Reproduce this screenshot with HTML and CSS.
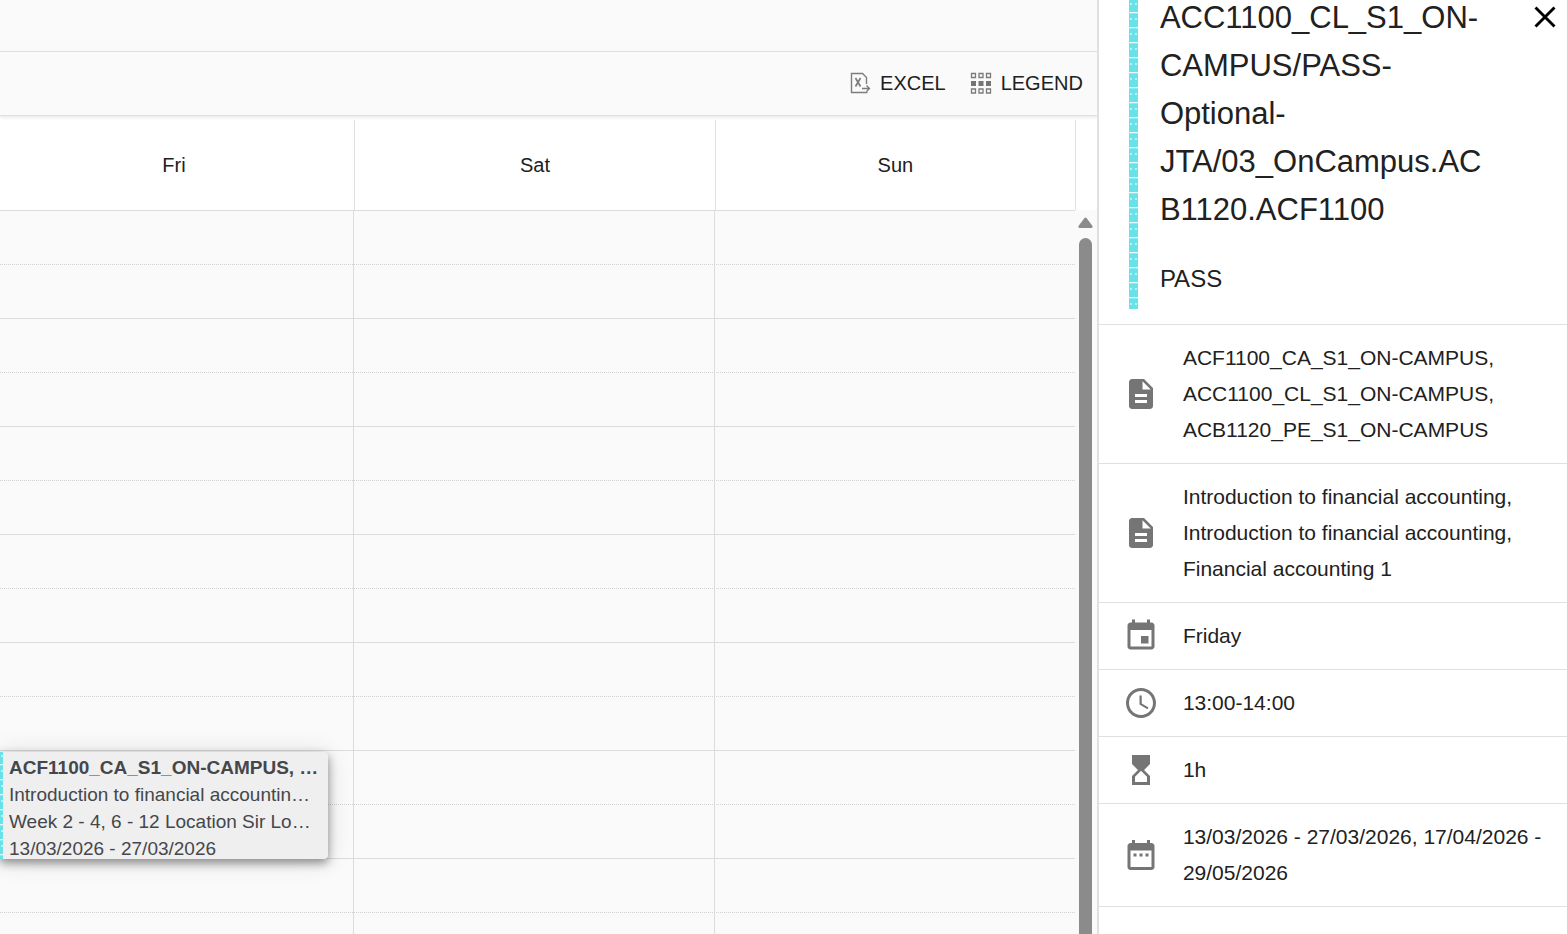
FILE: index.html
```html
<!DOCTYPE html>
<html lang="en">
<head>
<meta charset="utf-8">
<title>Timetable</title>
<link rel="stylesheet" href="styles.css">
</head>
<body>
<div class="app">
  <main class="planner">
    <div class="topbar"></div>
    <div class="toolbar">
      <button class="tool" type="button">
        <svg class="tool-icon" viewBox="0 0 22 22" aria-hidden="true"><g fill="none" stroke="#7d7d7d" stroke-width="1.400"><path d="M17.500 12V5.500L13.500 1.500H2.500V20.500H18.500M13 16.500H20.500M17.500 13.500L20.500 16.500L17.500 19.500"/><path d="M6.500 6L11.500 14.500M11.500 6L6.500 14.500" stroke-width="1.700"/></g></svg>
        EXCEL
      </button>
      <button class="tool" type="button">
        <svg class="tool-icon" viewBox="0 0 22 22" aria-hidden="true"><g fill="none" stroke="#7b7b7b" stroke-width="1.300"><path d="M1.500 1.500h4v4h-4zM9 1.500h4v4h-4zM16.500 1.500h4v4h-4zM1.500 17h4v4h-4zM9 17h4v4h-4zM16.500 17h4v4h-4z"/></g><path fill="#757575" d="M1 9h5v5H1zM8.500 9h5v5h-5zM16 9h5v5h-5z"/></svg>
        LEGEND
      </button>
    </div>
    <div class="days">
      <div class="day">Fri</div>
      <div class="day">Sat</div>
      <div class="day">Sun</div>
    </div>
    <div class="calendar">
      <div class="grid">
        <div class="column">
          <article class="event">
            <p class="event-line event-title">ACF1100_CA_S1_ON-CAMPUS, …</p>
            <p class="event-line">Introduction to financial accountin…</p>
            <p class="event-line">Week 2 - 4, 6 - 12 Location Sir Lo…</p>
            <p class="event-line">13/03/2026 - 27/03/2026</p>
          </article>
        </div>
        <div class="column"></div>
        <div class="column"></div>
      </div>
      <div class="scrollbar">
        <svg class="scroll-up" viewBox="0 0 15 11" aria-hidden="true"><path d="M6.500 1Q7.500 0 8.500 1L14.500 9Q15 11 13.500 11H1.500Q0 11 .5 9Z" fill="#8b8b8b"/></svg>
        <div class="thumb"></div>
      </div>
    </div>
  </main>
  <aside class="panel">
    <header class="panel-head">
      <div class="stripe"></div>
      <div class="heading">
        <h1 class="title">ACC1100_CL_S1_ON-CAMPUS/PASS-Optional-JTA/03_OnCampus.ACB1120.ACF1100</h1>
        <p class="subtitle">PASS</p>
      </div>
      <button class="close" type="button" aria-label="Close">
        <svg class="close-icon" viewBox="0 0 22 22" aria-hidden="true"><path d="M1.500 1.500L20.500 20.500M20.500 1.500L1.500 20.500" stroke="#000" stroke-width="2.900"/></svg>
      </button>
    </header>
    <ul class="details">
      <li class="detail">
        <svg class="icon" viewBox="0 0 24 24" aria-hidden="true"><path d="M14 2H6c-1.100 0-1.990.9-1.990 2L4 20c0 1.100.89 2 1.990 2H18c1.100 0 2-.9 2-2V8l-6-6zm2 16H8v-2h8v2zm0-4H8v-2h8v2zm-3-5V3.500L18.500 9H13z"/></svg>
        <span>ACF1100_CA_S1_ON-CAMPUS, ACC1100_CL_S1_ON-CAMPUS, ACB1120_PE_S1_ON-CAMPUS</span>
      </li>
      <li class="detail">
        <svg class="icon" viewBox="0 0 24 24" aria-hidden="true"><path d="M14 2H6c-1.100 0-1.990.9-1.990 2L4 20c0 1.100.89 2 1.990 2H18c1.100 0 2-.9 2-2V8l-6-6zm2 16H8v-2h8v2zm0-4H8v-2h8v2zm-3-5V3.500L18.500 9H13z"/></svg>
        <span>Introduction to financial accounting, Introduction to financial accounting, Financial accounting 1</span>
      </li>
      <li class="detail">
        <svg class="icon" viewBox="0 0 24 24" aria-hidden="true"><path d="M17 12h-5v5h5v-5zM16 1v2H8V1H6v2H5c-1.110 0-1.990.9-1.990 2L3 19c0 1.100.89 2 2 2h14c1.100 0 2-.9 2-2V5c0-1.100-.9-2-2-2h-1V1h-2zm3 18H5V8h14v11z"/></svg>
        <span>Friday</span>
      </li>
      <li class="detail">
        <svg class="icon" viewBox="0 0 24 24" aria-hidden="true"><path d="M11.990 2C6.470 2 2 6.480 2 12s4.470 10 9.990 10C17.520 22 22 17.520 22 12S17.520 2 11.990 2zM12 20c-4.420 0-8-3.580-8-8s3.580-8 8-8 8 3.580 8 8-3.580 8-8 8zm.5-13H11v6l5.250 3.150.75-1.230-4.500-2.670z"/></svg>
        <span>13:00-14:00</span>
      </li>
      <li class="detail">
        <svg class="icon" viewBox="0 0 24 24" aria-hidden="true"><path d="M6 2v6h.01L6 8.010 10 12l-4 4 .01.01H6V22h12v-5.990h-.01L18 16l-4-4 4-3.990-.01-.01H18V2H6zm10 14.500V20H8v-3.500l4-4 4 4z"/></svg>
        <span>1h</span>
      </li>
      <li class="detail">
        <svg class="icon" viewBox="0 0 24 24" aria-hidden="true"><path d="M9 11H7v2h2v-2zm4 0h-2v2h2v-2zm4 0h-2v2h2v-2zm2-7h-1V2h-2v2H8V2H6v2H5c-1.110 0-1.990.9-1.990 2L3 20c0 1.100.89 2 2 2h14c1.100 0 2-.9 2-2V6c0-1.100-.9-2-2-2zm0 16H5V9h14v11z"/></svg>
        <span>13/03/2026 - 27/03/2026, 17/04/2026 - 29/05/2026</span>
      </li>
    </ul>
  </aside>
</div>
</body>
</html>
```
FILE: styles.css
```css
* {
  box-sizing: border-box;
}

body {
  margin: 0;
  font-family: "Liberation Sans", Arial, sans-serif;
  font-size: 21px;
  color: #212121;
  background: #fff;
}

button {
  padding: 0;
  border: 0;
  background: none;
  font: inherit;
  color: inherit;
  cursor: pointer;
}

svg {
  display: block;
  flex: none;
}

.app {
  display: grid;
  grid-template-columns: minmax(0, 7fr) minmax(0, 3fr);
  height: 100vh;
  overflow: hidden;
}

.planner {
  display: flex;
  flex-direction: column;
  min-width: 0;
  min-height: 0;
}

.topbar {
  flex: none;
  height: 51px;
  background: #fafafa;
}

.toolbar {
  display: flex;
  flex: none;
  justify-content: flex-end;
  align-items: center;
  gap: 24px;
  height: 65px;
  padding: 0 14px 1px 0;
  font-size: 20px;
  background: #fafafa;
  border-top: 1px solid #e0e0e0;
  border-bottom: 1px solid #e0e0e0;
  box-shadow: 0 2px 3px rgba(0, 0, 0, 0.08);
}

.tool {
  display: flex;
  align-items: center;
  gap: 9px;
}

.tool-icon {
  width: 22px;
  height: 22px;
}

.days {
  display: grid;
  flex: none;
  grid-template-columns: 355fr 361fr 360fr;
  height: 90px;
  margin: 4px 21px 0 0;
  font-size: 20px;
}

.day {
  display: flex;
  align-items: center;
  justify-content: center;
  padding-right: 6px;
  border-right: 1px solid #e0e0e0;
}

.day + .day {
  padding-right: 0;
}

.calendar {
  display: flex;
  flex: 1;
  min-height: 0;
  overflow: hidden;
  background: #fafafa;
}

.grid {
  display: grid;
  flex: 1;
  grid-template-columns: 354fr 361fr 360fr;
  border-top: 1px solid #dcdcdc;
  background:
    repeating-linear-gradient(transparent 0 107px, #dcdcdc 107px 108px),
    repeating-linear-gradient(90deg, transparent 0 1px, #fafafa 1px 2px),
    repeating-linear-gradient(#fafafa 0 53px, #d2d2d2 53px 54px, #fafafa 54px 108px);
}

.column {
  position: relative;
  border-right: 1px solid #dcdcdc;
}

.column:last-child {
  border-right: 0;
}

.event {
  position: absolute;
  top: 541px;
  left: 0;
  right: 25px;
  height: 107px;
  padding: 2px 6px 0 9px;
  color: #45474b;
  background: #efeff0;
  border-radius: 0 4px 4px 0;
  box-shadow: 0 4px 10px rgba(0, 0, 0, 0.4), 0 2px 24px rgba(0, 0, 0, 0.14);
}

.event-line {
  margin: 0;
  font-size: 19px;
  line-height: 27px;
  white-space: nowrap;
}

.event-title {
  font-weight: bold;
}

.stripe,
.event::before {
  background:
    radial-gradient(circle at 2px 4px, #b4f2f6 0 1px, transparent 1px),
    radial-gradient(circle at 7px 4px, #b4f2f6 0 1px, transparent 1px),
    linear-gradient(#68e1e9 0 12px, #e4fbfc 12px 13px, #8ee9ef 13px 14px, #68e1e9 14px);
  background-size: 9px 15px;
}

.event::before {
  content: "";
  position: absolute;
  inset: 0 auto 0 0;
  width: 3px;
}

.scrollbar {
  display: flex;
  flex: none;
  flex-direction: column;
  align-items: center;
  gap: 10px;
  width: 22px;
  padding: 7px 1px 0 0;
}

.scroll-up {
  width: 15px;
  height: 11px;
}

.thumb {
  flex: 1;
  width: 13px;
  background: #8b8b8b;
  border-radius: 7px 7px 0 0;
}

.panel {
  min-width: 0;
  overflow: hidden;
  background: #fff;
  border-left: 2px solid #e0e0e0;
}

.panel-head {
  display: flex;
  padding: 0 11px 15px 30px;
  border-bottom: 1px solid #e0e0e0;
}

.stripe {
  flex: none;
  width: 9px;
}

.heading {
  flex: 1;
  min-width: 0;
  padding: 0 44px 12px 22px;
}

.title {
  margin: -6px 0 27px;
  font-size: 31px;
  font-weight: normal;
  line-height: 48px;
  overflow-wrap: anywhere;
}

.subtitle {
  margin: 0;
  font-size: 24px;
  line-height: 36px;
}

.close {
  align-self: flex-start;
  padding-top: 6px;
}

.close-icon {
  width: 22px;
  height: 22px;
}

.details {
  margin: 0;
  padding: 0;
  list-style: none;
}

.detail {
  display: flex;
  align-items: center;
  gap: 24px;
  padding: 15px 20px 15px 24px;
  line-height: 36px;
  border-bottom: 1px solid #e0e0e0;
}

.icon {
  width: 36px;
  height: 36px;
  fill: #757575;
}
```
